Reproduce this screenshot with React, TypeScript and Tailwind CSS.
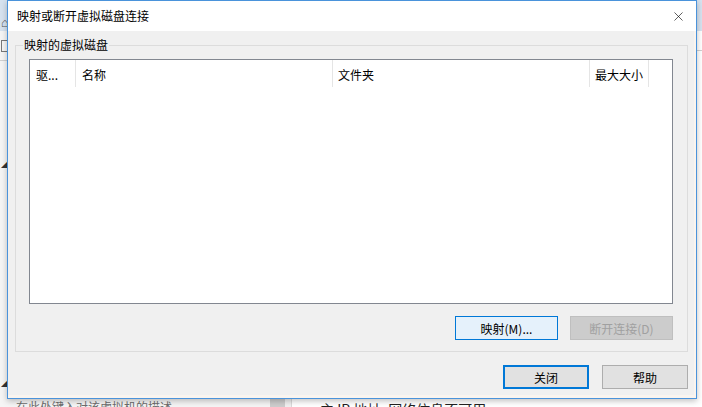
import { X } from 'lucide-react'

const columns = [
  { label: '驱...', w: 'w-[46px]', pl: 'pl-[6px]' },
  { label: '名称', w: 'w-[257px]', pl: 'pl-[6px]' },
  { label: '文件夹', w: 'w-[257px]', pl: 'pl-[5px]' },
  { label: '最大大小', w: 'w-[59px]', pl: 'pl-[5px]' },
]

function Background() {
  return (
    <div className="flex h-full">
      <div className="w-[270px] flex flex-col bg-[#f5f5f5]">
        <div className="h-[31px] bg-[#d6e2ef] flex items-end pl-[1px] text-[13px] text-[#555]">⌂</div>
        <div className="h-[30px] flex items-center pl-[1px] border-b border-[#d0d0d0]">
          <div className="w-[10px] h-[12px] border border-[#777]" />
        </div>
        <div className="h-[98px]" />
        <div className="h-[10px] pl-[1px] text-[8px] leading-[10px] text-[#333]">◢</div>
        <div className="flex-1" />
        <div className="h-[10px] pl-[1px] text-[8px] leading-[10px] text-[#333]">◢</div>
        <div className="h-[11px]" />
        <div className="h-[8px] overflow-hidden pl-[16px] text-[12px] leading-[16px] text-[#6d6d6d]">在此处键入对该虚拟机的描述。</div>
      </div>
      <div className="w-[15px] bg-[#cdcdcd]" />
      <div className="w-[6px] bg-[#f0f0f0]" />
      <div className="flex-1 flex flex-col bg-white border-l border-[#dadada]">
        <div className="h-[31px] bg-[#d6e2ef]" />
        <div className="h-[20px] border-b border-[#d0d0d0]" />
        <div className="flex-1" />
        <div className="h-[7px] overflow-hidden pl-[28px] text-[14px] leading-[18px] text-[#222]">主 IP 地址: 网络信息不可用</div>
      </div>
    </div>
  )
}

function Button({ label, kind }: { label: string; kind: 'hot' | 'disabled' | 'default' | 'normal' }) {
  const styles = {
    hot: 'w-[103px] border border-[#0078d7] bg-[#e5f1fb] text-black',
    disabled: 'w-[103px] border border-[#bfbfbf] bg-[#cccccc] text-[#a0a0a0]',
    default: 'w-[86px] border-2 border-[#0078d7] bg-[#e1e1e1] text-black',
    normal: 'w-[86px] border border-[#adadad] bg-[#e1e1e1] text-black',
  }[kind]
  return (
    <div className={`h-[24px] flex items-center justify-center pt-[2px] ${styles}`}>{label}</div>
  )
}

export default function App() {
  return (
    <div className="relative w-[702px] h-[407px] overflow-hidden bg-white font-['Noto_Sans_CJK_SC',sans-serif] text-[12px] text-black">
      <Background />

      {/* dialog window */}
      <div className="absolute left-[7px] top-0 w-[690px] h-[399px] flex flex-col border border-[#4a93db] shadow-[0_2px_6px_rgba(0,0,0,0.25)]">
        <div className="h-[30px] shrink-0 bg-white flex items-center justify-between pl-[9px] pr-[10px]">
          <span className="leading-[16px]">映射或断开虚拟磁盘连接</span>
          <X size={15} strokeWidth={1} className="text-black" />
        </div>

        <div className="flex-1 flex flex-col bg-[#f0f0f0] border-r-[2px] border-b-[3px] border-[#f9f4ef] pl-[7px] pr-[6px] pt-[14px]">
          <div className="relative h-[307px] border border-[#dcdcdc] pl-[13px] pr-[14px] pt-[13px] flex flex-col">
            <span className="absolute left-[7px] -top-[9px] bg-[#f0f0f0] px-[1px] leading-[16px]">映射的虚拟磁盘</span>
            <div className="h-[245px] border border-[#828790] bg-white">
              <div className="flex h-[27px]">
                {columns.map(c => (
                  <div key={c.label} className={`${c.w} ${c.pl} h-full flex items-center pt-[2px] border-r border-[#e5e5e5] whitespace-nowrap overflow-hidden`}>
                    {c.label}
                  </div>
                ))}
              </div>
            </div>
            <div className="flex justify-end gap-[12px] mt-[12px]">
              <Button label="映射(M)..." kind="hot" />
              <Button label="断开连接(D)" kind="disabled" />
            </div>
          </div>

          <div className="flex justify-end gap-[13px] mt-[13px] pr-[0px]">
            <Button label="关闭" kind="default" />
            <Button label="帮助" kind="normal" />
          </div>
        </div>
      </div>
    </div>
  )
}
